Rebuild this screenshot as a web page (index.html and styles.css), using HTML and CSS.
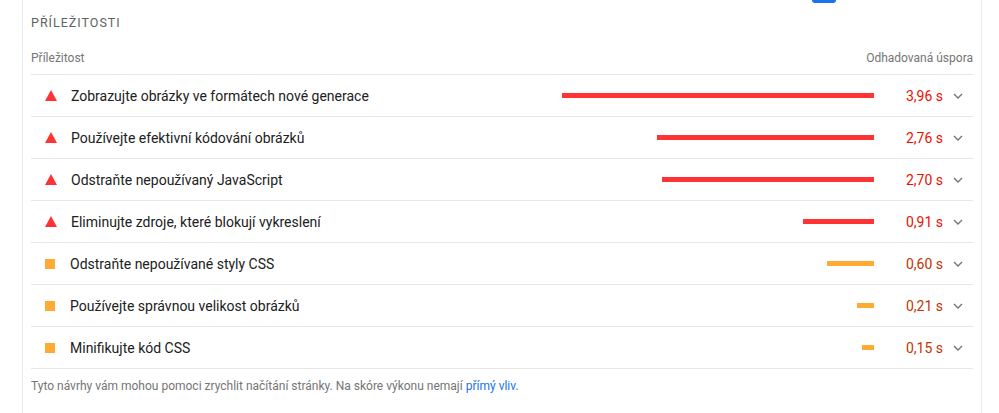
FILE: index.html
```html
<!DOCTYPE html>
<html lang="cs">
<head>
<meta charset="utf-8">
<title>Příležitosti</title>
<link rel="stylesheet" href="styles.css">
</head>
<body>
<div class="panel">
  <div class="filter">
    <span class="filter-label">Zobrazit audity relevantní pro:</span>
    <span class="chip chip-active">Vše</span>
    <span class="chip">FCP</span>
    <span class="chip">LCP</span>
    <span class="chip">TBT</span>
    <span class="chip">CLS</span>
  </div>

  <div class="group-title">Příležitosti</div>

  <div class="table-head">
    <span>Příležitost</span>
    <span>Odhadovaná úspora</span>
  </div>

  <div class="audit fail">
    <span class="icon-fail"></span>
    <span class="audit-title">Zobrazujte obrázky ve formátech nové generace</span>
    <span class="spark"><span class="bar" style="width:312px"></span></span>
    <span class="value">3,96 s</span>
    <span class="chevron"><svg width="10" height="6" viewBox="0 0 10 6"><polyline points="1,1 5,5 9,1" /></svg></span>
  </div>

  <div class="audit fail">
    <span class="icon-fail"></span>
    <span class="audit-title">Používejte efektivní kódování obrázků</span>
    <span class="spark"><span class="bar" style="width:217px"></span></span>
    <span class="value">2,76 s</span>
    <span class="chevron"><svg width="10" height="6" viewBox="0 0 10 6"><polyline points="1,1 5,5 9,1" /></svg></span>
  </div>

  <div class="audit fail">
    <span class="icon-fail"></span>
    <span class="audit-title">Odstraňte nepoužívaný JavaScript</span>
    <span class="spark"><span class="bar" style="width:212px"></span></span>
    <span class="value">2,70 s</span>
    <span class="chevron"><svg width="10" height="6" viewBox="0 0 10 6"><polyline points="1,1 5,5 9,1" /></svg></span>
  </div>

  <div class="audit fail">
    <span class="icon-fail"></span>
    <span class="audit-title">Eliminujte zdroje, které blokují vykreslení</span>
    <span class="spark"><span class="bar" style="width:71px"></span></span>
    <span class="value">0,91 s</span>
    <span class="chevron"><svg width="10" height="6" viewBox="0 0 10 6"><polyline points="1,1 5,5 9,1" /></svg></span>
  </div>

  <div class="audit average">
    <span class="icon-average"></span>
    <span class="audit-title">Odstraňte nepoužívané styly CSS</span>
    <span class="spark"><span class="bar" style="width:47px"></span></span>
    <span class="value">0,60 s</span>
    <span class="chevron"><svg width="10" height="6" viewBox="0 0 10 6"><polyline points="1,1 5,5 9,1" /></svg></span>
  </div>

  <div class="audit average">
    <span class="icon-average"></span>
    <span class="audit-title">Používejte správnou velikost obrázků</span>
    <span class="spark"><span class="bar" style="width:17px"></span></span>
    <span class="value">0,21 s</span>
    <span class="chevron"><svg width="10" height="6" viewBox="0 0 10 6"><polyline points="1,1 5,5 9,1" /></svg></span>
  </div>

  <div class="audit average">
    <span class="icon-average"></span>
    <span class="audit-title">Minifikujte kód CSS</span>
    <span class="spark"><span class="bar" style="width:12px"></span></span>
    <span class="value">0,15 s</span>
    <span class="chevron"><svg width="10" height="6" viewBox="0 0 10 6"><polyline points="1,1 5,5 9,1" /></svg></span>
  </div>

  <p class="footer">Tyto návrhy vám mohou pomoci zrychlit načítání stránky. Na skóre výkonu nemají <a href="#">přímý vliv</a>.</p>
</div>
</body>
</html>
```

FILE: styles.css
```css
html, body {
  margin: 0;
  padding: 0;
  height: 100%;
  overflow: hidden;
  background: #ffffff;
}

body {
  font-family: Roboto, "Liberation Sans", Arial, sans-serif;
  color: #212121;
}

.panel {
  display: flow-root;
  box-sizing: border-box;
  margin-left: 22px;
  width: 960px;
  min-height: 100%;
  padding: 0 8px;
  border-left: 1px solid #ebebeb;
  border-right: 1px solid #ebebeb;
}

.filter {
  display: flex;
  justify-content: flex-end;
  align-items: center;
  height: 22px;
  margin-top: -19px;
  font-size: 12px;
  color: #616161;
}

.filter-label {
  margin-right: 30px;
}

.chip {
  display: inline-block;
  height: 22px;
  line-height: 22px;
  padding: 0 4px;
  border-radius: 3px;
  min-width: 22px;
  box-sizing: border-box;
  text-align: center;
  color: #616161;
}

.chip + .chip {
  margin-left: 4.5px;
}

.chip-active {
  background: #1a73e8;
  color: #ffffff;
  padding: 0 2px;
}

.group-title {
  margin-top: 12px;
  font-size: 12.5px;
  line-height: 16px;
  letter-spacing: 1px;
  text-transform: uppercase;
  color: #616161;
}

.table-head {
  display: flex;
  justify-content: space-between;
  margin-top: 19px;
  padding-bottom: 8px;
  font-size: 12px;
  line-height: 16px;
  color: #757575;
  border-bottom: 1px solid #e6e6e6;
}

.audit {
  display: flex;
  align-items: center;
  height: 41px;
  border-bottom: 1px solid #e6e6e6;
  font-size: 14px;
}

.icon-fail {
  flex: none;
  width: 0;
  height: 0;
  margin-left: 14px;
  margin-right: 14px;
  border-left: 6px solid transparent;
  border-right: 6px solid transparent;
  border-bottom: 11px solid #ff3333;
}

.icon-average {
  flex: none;
  width: 10px;
  height: 10px;
  margin-left: 14px;
  margin-right: 15px;
  background: #ffaa33;
}

.audit-title {
  flex: none;
  white-space: nowrap;
}

.spark {
  flex: 1;
  display: flex;
  justify-content: flex-end;
  align-items: center;
}

.bar {
  display: block;
  height: 5px;
}

.fail .bar {
  background: #ff3333;
}

.average .bar {
  background: #ffaa33;
}

.value {
  flex: none;
  width: 69px;
  text-align: right;
}

.fail .value {
  color: #eb0f00;
}

.average .value {
  color: #c33300;
}

.chevron {
  flex: none;
  width: 30px;
  display: flex;
  justify-content: center;
  align-items: center;
}

.chevron svg {
  display: block;
  fill: none;
  stroke: #757575;
  stroke-width: 1.4;
}

.footer {
  margin: 9px 0 0;
  font-size: 12px;
  line-height: 16px;
  color: #757575;
}

.footer a {
  color: #1a73e8;
  text-decoration: none;
}
```
